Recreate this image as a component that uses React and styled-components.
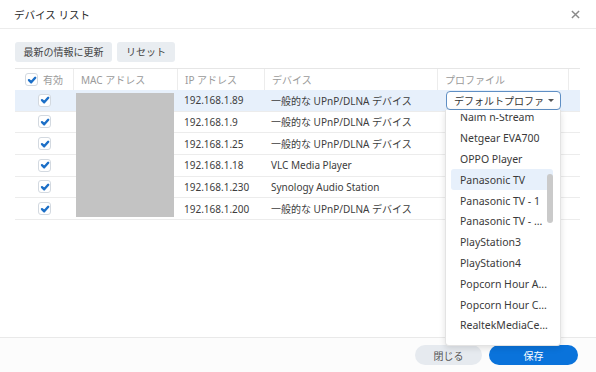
import React from 'react';
import styled, { createGlobalStyle } from 'styled-components';

const Global = createGlobalStyle`
  html, body { margin: 0; padding: 0; background: #fff; }
  body {
    font-family: "Noto Sans", "Noto Sans CJK JP", sans-serif;
    font-size: 10px;
    color: #3b3b3b;
  }
`;

const Dialog = styled.div`
  width: 596px;
  height: 372px;
  display: flex;
  flex-direction: column;
  background: #fff;
  overflow: hidden;
`;

const TitleBar = styled.div`
  height: 29px;
  display: flex;
  align-items: center;
  justify-content: space-between;
  padding: 0 16px 0 14px;
  border-bottom: 1px solid #ececec;
  box-sizing: border-box;
`;

const Title = styled.div`
  font-size: 10.5px;
  color: #2a2a2a;
`;

const Close = styled.svg`
  width: 9px;
  height: 9px;
  stroke: #8a8a8a;
  stroke-width: 1.6;
`;

const Body = styled.div`
  flex: 1;
  padding: 13px 16px 0 15px;
`;

const Toolbar = styled.div`
  display: flex;
  gap: 5px;
  margin-bottom: 6px;
`;

const ToolButton = styled.button`
  height: 20px;
  padding: 0 ${p => p.$pad || 9}px;
  border: none;
  border-radius: 3px;
  background: #e9edf1;
  color: #444;
  font-family: inherit;
  font-size: 10px;
  line-height: 20px;
`;

const cols = '59px 104px 87px 173px 131px 11px';

const HeadRow = styled.div`
  display: grid;
  grid-template-columns: ${cols};
  height: 22px;
  border-top: 1px solid #e6e6e6;
  box-sizing: border-box;
`;

const HeadCell = styled.div`
  display: flex;
  align-items: center;
  justify-content: ${p => (p.$center ? 'center' : 'flex-start')};
  gap: 5px;
  padding: 0 7px;
  color: #9a9a9a;
  border-right: ${p => (p.$last ? 'none' : '1px solid #ececec')};
`;

const Rows = styled.div`
  position: relative;
`;

const Row = styled.div`
  display: grid;
  grid-template-columns: ${cols};
  height: 21.67px;
  box-sizing: border-box;
  border-bottom: 1px solid #ececec;
  background: ${p => (p.$active ? '#e7f0fb' : 'transparent')};
`;

const Cell = styled.div`
  display: flex;
  align-items: center;
  justify-content: ${p => (p.$center ? 'center' : 'flex-start')};
  padding: 0 6px;
  white-space: nowrap;
  color: #3d3d3d;
  position: relative;
`;

const Box = styled.span`
  width: 13px;
  height: 13px;
  border: 1px solid #d3d9e0;
  border-radius: 3px;
  background: #fff;
  display: inline-flex;
  align-items: center;
  justify-content: center;
  box-sizing: border-box;
  svg {
    width: 10px;
    height: 10px;
    stroke: #1c6fc7;
    stroke-width: 2.4;
    fill: none;
    stroke-linecap: round;
    stroke-linejoin: round;
  }
`;

const Redaction = styled.div`
  position: absolute;
  left: 61px;
  top: 3px;
  width: 98px;
  height: 124px;
  background: #c3c3c3;
`;

const Select = styled.div`
  width: 115px;
  height: 19px;
  margin-left: 2px;
  border: 1px solid #5f8fc4;
  border-radius: 4px;
  background: #fff;
  box-sizing: border-box;
  display: flex;
  align-items: center;
  justify-content: space-between;
  padding: 0 6px 0 7px;
  color: #333;
  font-size: 10px;
`;

const Caret = styled.span`
  width: 0;
  height: 0;
  border-left: 3px solid transparent;
  border-right: 3px solid transparent;
  border-top: 3.5px solid #555;
`;

const Menu = styled.div`
  position: absolute;
  left: 7px;
  top: 20px;
  width: 116px;
  height: 236px;
  background: #fff;
  border: 1px solid #e3e3e3;
  border-top: none;
  box-sizing: border-box;
  box-shadow: 0 2px 6px rgba(0, 0, 0, 0.12);
  border-radius: 0 0 4px 4px;
  padding-top: 4px;
  z-index: 5;
`;

const Viewport = styled.div`
  height: 100%;
  overflow: hidden;
`;

const MenuList = styled.div`
  margin-top: -7px;
`;

const Item = styled.div`
  height: 20.8px;
  margin: 0 7px 0 5px;
  padding-left: 9px;
  border-radius: 3px;
  display: flex;
  align-items: center;
  color: #3a3a3a;
  font-size: 10.5px;
  background: ${p => (p.$hover ? '#e7f0fb' : 'transparent')};
`;

const Thumb = styled.div`
  position: absolute;
  right: 7px;
  top: 64px;
  width: 6px;
  height: 49px;
  border-radius: 3px;
  background: #cacaca;
`;

const Footer = styled.div`
  height: 35px;
  border-top: 1px solid #e9e9e9;
  background: #fcfcfc;
  display: flex;
  justify-content: flex-end;
  align-items: flex-start;
  padding: 7px 18px 0 0;
  gap: 7px;
  box-sizing: border-box;
`;

const FootButton = styled.button`
  width: ${p => p.$w}px;
  height: 20px;
  border: none;
  border-radius: 10px;
  font-family: inherit;
  font-size: 10px;
  background: ${p => (p.$primary ? '#0a73db' : '#e6eaef')};
  color: ${p => (p.$primary ? '#fff' : '#555')};
`;

const Check = () => (
  <Box>
    <svg viewBox="0 0 10 10">
      <path d="M2 5.2 L4.2 7.3 L8.2 2.8" />
    </svg>
  </Box>
);

const devices = [
  ['192.168.1.89', '一般的な UPnP/DLNA デバイス'],
  ['192.168.1.9', '一般的な UPnP/DLNA デバイス'],
  ['192.168.1.25', '一般的な UPnP/DLNA デバイス'],
  ['192.168.1.18', 'VLC Media Player'],
  ['192.168.1.230', 'Synology Audio Station'],
  ['192.168.1.200', '一般的な UPnP/DLNA デバイス'],
];

const profiles = [
  'Naim n-Stream',
  'Netgear EVA700',
  'OPPO Player',
  'Panasonic TV',
  'Panasonic TV - 1',
  'Panasonic TV - ...',
  'PlayStation3',
  'PlayStation4',
  'Popcorn Hour A...',
  'Popcorn Hour C...',
  'RealtekMediaCe...',
];

const App = () => (
  <Dialog>
    <Global />
    <TitleBar>
      <Title>デバイス リスト</Title>
      <Close viewBox="0 0 10 10">
        <path d="M1 1 L9 9 M9 1 L1 9" />
      </Close>
    </TitleBar>
    <Body>
      <Toolbar>
        <ToolButton $pad={8.5}>最新の情報に更新</ToolButton>
        <ToolButton>リセット</ToolButton>
      </Toolbar>
      <HeadRow>
        <HeadCell $center>
          <Check />
          有効
        </HeadCell>
        <HeadCell>MAC アドレス</HeadCell>
        <HeadCell>IP アドレス</HeadCell>
        <HeadCell>デバイス</HeadCell>
        <HeadCell>プロファイル</HeadCell>
        <HeadCell $last />
      </HeadRow>
      <Rows>
        {devices.map(([ip, name], i) => (
          <Row key={ip} $active={i === 0}>
            <Cell $center>
              <Check />
            </Cell>
            <Cell />
            <Cell>{ip}</Cell>
            <Cell>{name}</Cell>
            <Cell>
              {i === 0 && (
                <>
                  <Select>
                    デフォルトプロファ
                    <Caret />
                  </Select>
                  <Menu>
                    <Viewport>
                      <MenuList>
                        {profiles.map(p => (
                          <Item key={p} $hover={p === 'Panasonic TV'}>
                            {p}
                          </Item>
                        ))}
                      </MenuList>
                    </Viewport>
                    <Thumb />
                  </Menu>
                </>
              )}
            </Cell>
            <Cell />
          </Row>
        ))}
        <Redaction />
      </Rows>
    </Body>
    <Footer>
      <FootButton $w={67}>閉じる</FootButton>
      <FootButton $w={89} $primary>
        保存
      </FootButton>
    </Footer>
  </Dialog>
);

export default App;
